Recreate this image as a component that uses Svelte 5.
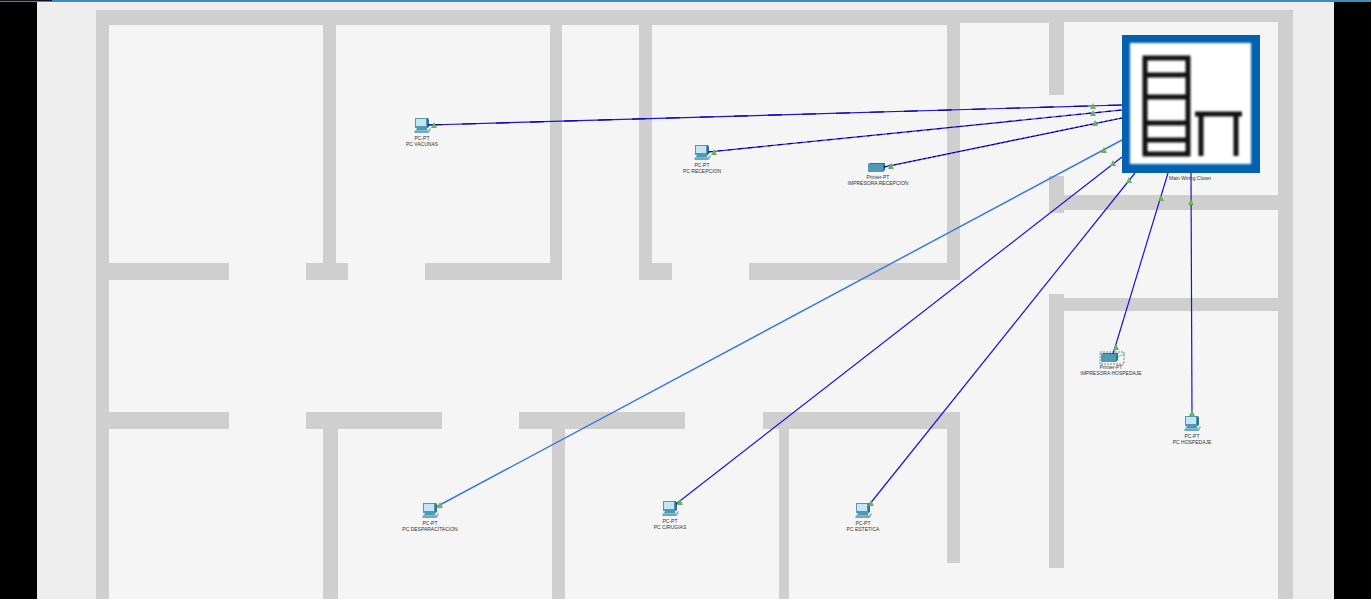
<script>
  const walls = [
    // outer shell
    [96, 10, 13, 589], [96, 10, 864, 15], [960, 10, 89, 13], [1049, 10, 244, 12], [1278, 10, 15, 589],
    // upper rooms
    [323, 25, 13, 239], [550, 25, 12, 239], [639, 25, 13, 239], [947, 25, 13, 239],
    [109, 263, 120, 17], [306, 263, 42, 17], [425, 263, 137, 17], [639, 263, 33, 17], [749, 263, 211, 17],
    // lower rooms
    [109, 412, 120, 17], [306, 412, 136, 17], [519, 412, 166, 17], [763, 412, 197, 17],
    [323, 429, 15, 170], [552, 429, 13, 170], [779, 429, 10, 170], [947, 429, 13, 134],
    // east wing
    [1049, 22, 15, 73], [1049, 176, 15, 37], [1049, 294, 15, 274],
    [1064, 195, 214, 15], [1064, 298, 214, 13]
  ];

  const links = [
    { from: [428, 125], to: [1122, 105], marks: [[434, 125], [1093, 106]], dash: '14 20' },
    { from: [708, 152], to: [1122, 110], marks: [[714, 152], [1093, 113]], dash: '5 5' },
    { from: [884, 167], to: [1122, 118], marks: [[891, 166], [1095, 123]], dash: '3 2' },
    { from: [436, 507], to: [1122, 140], marks: [[440, 505], [1104, 150]], light: true },
    { from: [676, 504], to: [1122, 157], marks: [[680, 502], [1113, 163]] },
    { from: [869, 505], to: [1135, 173], marks: [[871, 503], [1129, 180]] },
    { from: [1113, 354], to: [1168, 173], marks: [[1116, 347], [1161, 198]] },
    { from: [1192, 416], to: [1191, 173], marks: [[1192, 413], [1191, 202]] }
  ];

  const devices = [
    { kind: 'pc', x: 422, y: 118, model: 'PC-PT', name: 'PC VACUNAS' },
    { kind: 'pc', x: 702, y: 145, model: 'PC-PT', name: 'PC RECEPCION' },
    { kind: 'printer', x: 878, y: 157, model: 'Printer-PT', name: 'IMPRESORA RECEPCION' },
    { kind: 'pc', x: 430, y: 503, model: 'PC-PT', name: 'PC DESPARACITACION' },
    { kind: 'pc', x: 670, y: 501, model: 'PC-PT', name: 'PC CIRUGIAS' },
    { kind: 'pc', x: 863, y: 503, model: 'PC-PT', name: 'PC ESTETICA' },
    { kind: 'printer', x: 1111, y: 347, model: 'Printer-PT', name: 'IMPRESORA HOSPEDAJE', selected: true },
    { kind: 'pc', x: 1192, y: 416, model: 'PC-PT', name: 'PC HOSPEDAJE' }
  ];
</script>

<main>
  <div class="strip"><span></span></div>
  <div class="stage">
    <svg class="plan" viewBox="37 2 1297 597" role="img" aria-label="Main Wiring Closet">
      <rect class="floor" x="96" y="10" width="1197" height="589" />
      <g class="walls">
        {#each walls as [x, y, width, height]}
          <rect {x} {y} {width} {height} />
        {/each}
      </g>

      {#each devices as d}
        <g transform="translate({d.x} {d.y})">
          {#if d.kind === 'pc'}
            <path class="side" d="M4 0h2l1 2v7l-3 2z" />
            <path class="case" d="M-7 0H5V10H-7z" />
            <path class="glass" d="M-6 1H4V8H-6z" />
            <path class="case" d="M-5 10H5v2H-6z" />
            <path class="keys" d="M-7 12H6l2-2 1 1-2 4H-8z" />
            <path class="ridge" d="M-7 14H6" />
          {:else}
            <path class="side" d="M-10 7l2-1H7L5 7zM5 7l2-1v7l-2 2z" />
            <path class="body" d="M-10 7H5v8h-15z" />
            <path class="tray" d="M7 10l4-2 3-1" />
            {#if d.selected}
              <rect class="pick" x="-11" y="5" width="24" height="12" />
            {/if}
          {/if}
          <text y="22">{d.model}</text>
          <text y="28">{d.name}</text>
        </g>
      {/each}

      <text x="1190" y="180">Main Wiring Closet</text>

      {#each links as l}
        <line class="link" class:light={l.light} x1={l.from[0]} y1={l.from[1]} x2={l.to[0]} y2={l.to[1]} />
        {#if l.dash}
          <line class="core" stroke-dasharray={l.dash} x1={l.from[0]} y1={l.from[1]} x2={l.to[0]} y2={l.to[1]} />
        {/if}
        {#each l.marks as [x, y]}
          <path class="mark" d="M{x} {y - 3}l3 6h-6z" />
        {/each}
      {/each}

      <g>
        <rect class="frame" x="1122" y="35" width="138" height="138" />
        <g class="sign">
          <rect class="panel" x="1130" y="43" width="121" height="121" />
          <rect class="bars" x="1145" y="58" width="43" height="96" />
          <path class="bars" d="M1145 75h43M1145 97h43M1145 123h43M1145 140h43M1195 114h47M1201 114v42M1236 114v42" />
        </g>
      </g>
    </svg>
  </div>
</main>

<style>
  :global(body) {
    margin: 0;
    background: #000;
  }
  .strip {
    height: 2px;
    background: #3d8db3;
  }
  .strip span {
    display: block;
    width: 52px;
    height: 1px;
    background: #14101c;
    border-bottom: 1px solid #77747c;
  }
  .stage {
    padding: 0 37px;
    background: #000;
  }
  .plan {
    display: block;
    width: 100%;
    height: auto;
    background: #eee;
  }
  .floor {
    fill: #f5f5f5;
  }
  .walls {
    fill: #cfcfcf;
    shape-rendering: crispEdges;
  }
  text {
    font: 5px "Liberation Sans", Arial, sans-serif;
    text-anchor: middle;
    fill: #333;
  }
  .case {
    fill: #4f9ab2;
  }
  .side {
    fill: #2d7690;
  }
  .glass {
    fill: #c6e4f2;
  }
  .keys {
    fill: #8abccb;
  }
  .ridge {
    stroke: #4f9ab2;
  }
  .body {
    fill: #4f9bb3;
  }
  .tray {
    fill: none;
    stroke: #8dbccb;
  }
  .pick {
    fill: none;
    stroke: #6d8f9b;
    stroke-dasharray: 2 1;
  }
  .link {
    stroke: #1c14d8;
    stroke-width: 1.2px;
  }
  .link.light {
    stroke: #3c7ade;
    stroke-width: 1.5px;
  }
  .core {
    stroke: #0a0098;
    stroke-width: 1.2px;
  }
  .mark {
    fill: #68b556;
  }
  .frame {
    fill: #0362b0;
  }
  .sign {
    filter: blur(1px);
  }
  .panel {
    fill: #fff;
  }
  .bars {
    fill: none;
    stroke: #111;
    stroke-width: 5px;
  }
</style>
